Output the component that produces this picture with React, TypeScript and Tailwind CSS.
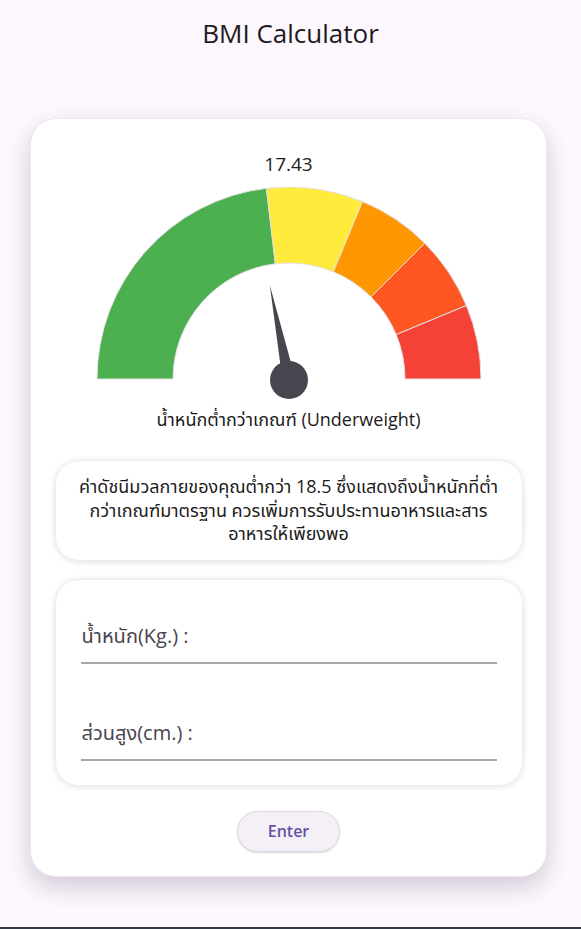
import React from 'react';

const FONT = { fontFamily: '"Open Sans", "Noto Sans", "Noto Sans Thai", "DejaVu Sans", sans-serif' };

const CX = 200;
const CY = 192;
const R_OUT = 192;
const R_IN = 116;
const MAX = 40;

const pt = (r: number, deg: number) => {
  const a = (deg * Math.PI) / 180;
  return [CX + r * Math.cos(a), CY - r * Math.sin(a)];
};

// value -> angle (180 at 0, 0 at MAX)
const ang = (v: number) => 180 - (v / MAX) * 180;

const arcPath = (from: number, to: number) => {
  const a1 = ang(from);
  const a2 = ang(to);
  const [x1, y1] = pt(R_OUT, a1);
  const [x2, y2] = pt(R_OUT, a2);
  const [x3, y3] = pt(R_IN, a2);
  const [x4, y4] = pt(R_IN, a1);
  return `M${x1} ${y1} A${R_OUT} ${R_OUT} 0 0 1 ${x2} ${y2} L${x3} ${y3} A${R_IN} ${R_IN} 0 0 0 ${x4} ${y4} Z`;
};

const segments = [
  { from: 0, to: 18.5, color: '#4CAF50' },
  { from: 18.5, to: 25, color: '#FFEB3B' },
  { from: 25, to: 30, color: '#FF9800' },
  { from: 30, to: 35, color: '#FF5722' },
  { from: 35, to: 40, color: '#F44336' },
];

const Gauge: React.FC<{ value: number }> = ({ value }) => {
  const a = ang(value);
  const [tx, ty] = pt(96, a);
  const perp = ((a + 90) * Math.PI) / 180;
  const hw = 6.5;
  const bx1 = CX + hw * Math.cos(perp);
  const by1 = CY + 1 - hw * Math.sin(perp);
  const bx2 = CX - hw * Math.cos(perp);
  const by2 = CY + 1 + hw * Math.sin(perp);
  return (
    <svg width="400" height="214" viewBox="0 0 400 214" className="block">
      {segments.map((s) => (
        <path key={s.from} d={arcPath(s.from, s.to)} fill={s.color} stroke="#e4e1e6" strokeWidth="1" />
      ))}
      <polygon points={`${tx},${ty} ${bx1},${by1} ${bx2},${by2}`} fill="#49454f" />
      <circle cx={CX} cy={CY + 1} r="19" fill="#49454f" />
    </svg>
  );
};

const Field: React.FC<{ label: string }> = ({ label }) => (
  <div className="flex flex-col">
    <span className="text-[20px] leading-[26px] text-[#49454f] pl-px">{label}</span>
    <div className="mt-[13px] h-[2px] bg-[#a9a6ad]" />
  </div>
);

export default function App() {
  return (
    <div className="h-[929px] flex flex-col bg-[#fdf7fe] text-[#1d1b20]" style={FONT}>
      <div className="flex-1 flex flex-col items-center">
        <h1 className="mt-[14px] text-[26px] leading-[38px] text-[#1d1b20]">BMI Calculator</h1>

        <div className="mt-[66px] w-[517px] ml-[-4px] bg-white rounded-[26px] border border-[#ebe7ee] shadow-[0_10px_24px_rgba(60,40,70,0.22)] flex flex-col items-center pt-[32px] pb-[24px]">
          <span className="text-[19px] leading-[26px]">17.43</span>
          <div className="mt-[10px]">
            <Gauge value={17.43} />
          </div>
          <span className="mt-[6px] text-[18px] leading-[24px]">น้ำหนักต่ำกว่าเกณฑ์ (Underweight)</span>

          <div className="mt-[29px] w-[468px] rounded-[24px] border border-[#eeebf0] shadow-[0_1px_6px_rgba(0,0,0,0.12)] px-[10px] py-[14px] text-center text-[18px] leading-[23.5px] whitespace-nowrap">
            ค่าดัชนีมวลกายของคุณต่ำกว่า 18.5 ซึ่งแสดงถึงน้ำหนักที่ต่ำ
            <br />
            กว่าเกณฑ์มาตรฐาน ควรเพิ่มการรับประทานอาหารและสาร
            <br />
            อาหารให้เพียงพอ
          </div>

          <div className="mt-[18px] w-[468px] h-[207px] rounded-[24px] border border-[#eeebf0] shadow-[0_1px_6px_rgba(0,0,0,0.12)] px-[25px] pt-[43px] flex flex-col gap-[56px]">
            <Field label="น้ำหนัก(Kg.) :" />
            <Field label="ส่วนสูง(cm.) :" />
          </div>

          <button className="mt-[25px] w-[103px] h-[41px] rounded-full bg-[#f5f0f8] border border-[#dcd7e0] shadow-[0_1px_2px_rgba(0,0,0,0.15)] text-[#6750a4] text-[16px] font-semibold">
            Enter
          </button>
        </div>
      </div>
      <div className="h-[2px] bg-[#353b45]" />
    </div>
  );
}
